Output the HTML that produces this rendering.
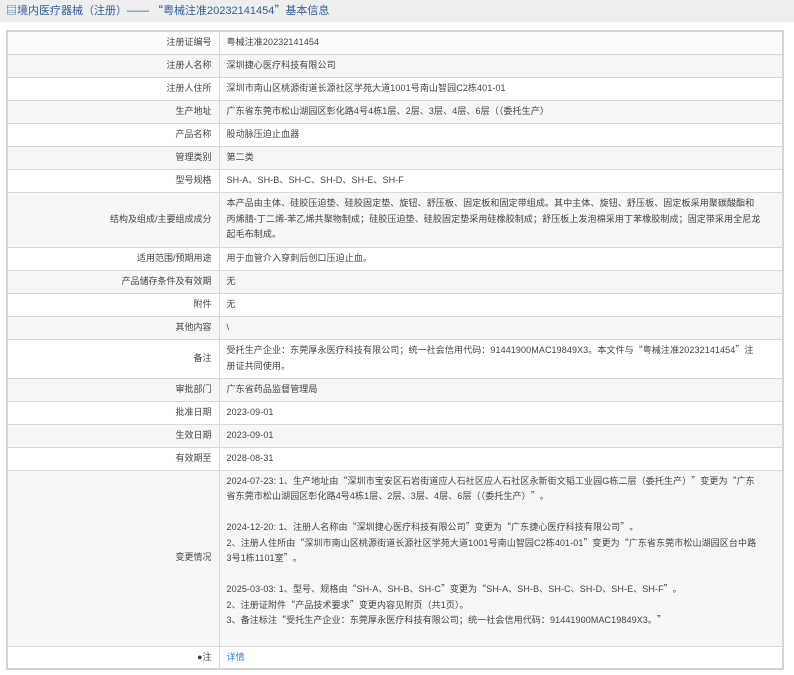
<!DOCTYPE html>
<html><head><meta charset="utf-8"><style>
*{margin:0;padding:0;box-sizing:border-box}
body{width:794px;height:675px;background:#fff;font-family:"Liberation Sans","Noto Sans CJK SC",sans-serif;font-size:9px;color:#444;position:relative;overflow:hidden}
.hd{height:22px;background:#eeeeee;color:#2e5f9e;font-size:11px;line-height:22px;padding-left:6px}
table{position:absolute;left:6px;top:30px;width:778px;border-collapse:collapse;border:2px solid #d4d4d4}
td{border:1px solid #d8d8d8;vertical-align:middle;line-height:15.5px}
td.l{width:212px;text-align:right;padding-right:7px}
td.v{padding-left:7px;padding-right:6px;letter-spacing:0.1px}
tr{height:23px}
tr.g{background:#f6f6f6}
tr.f{background:#fafcfe}
a{color:#3c7fd6;text-decoration:none}
q{quotes:none;font-family:"Noto Sans CJK SC",sans-serif;display:inline-block;width:1em;letter-spacing:0;line-height:8px;height:8px;vertical-align:baseline}
q.o{text-align:right}
.hd q{line-height:10px;height:10px}
</style></head><body>
<div class="hd">▤境内医疗器械（注册）—— <q class="o">“</q>粤械注准20232141454<q>”</q>基本信息</div>
<table>
<tr class="f"><td class="l">注册证编号</td><td class="v">粤械注准20232141454</td></tr>
<tr class="g"><td class="l">注册人名称</td><td class="v">深圳捷心医疗科技有限公司</td></tr>
<tr><td class="l">注册人住所</td><td class="v">深圳市南山区桃源街道长源社区学苑大道1001号南山智园C2栋401-01</td></tr>
<tr class="g"><td class="l">生产地址</td><td class="v">广东省东莞市松山湖园区彰化路4号4栋1层、2层、3层、4层、6层（（委托生产）</td></tr>
<tr><td class="l">产品名称</td><td class="v">股动脉压迫止血器</td></tr>
<tr class="g"><td class="l">管理类别</td><td class="v">第二类</td></tr>
<tr><td class="l">型号规格</td><td class="v">SH-A、SH-B、SH-C、SH-D、SH-E、SH-F</td></tr>
<tr class="g" style="height:55px"><td class="l">结构及组成/主要组成成分</td><td class="v">本产品由主体、硅胶压迫垫、硅胶固定垫、旋钮、舒压板、固定板和固定带组成。其中主体、旋钮、舒压板、固定板采用聚碳酸酯和<br>丙烯腈-丁二烯-苯乙烯共聚物制成；硅胶压迫垫、硅胶固定垫采用硅橡胶制成；舒压板上发泡棉采用丁苯橡胶制成；固定带采用全尼龙<br>起毛布制成。</td></tr>
<tr><td class="l">适用范围/预期用途</td><td class="v">用于血管介入穿刺后创口压迫止血。</td></tr>
<tr class="g"><td class="l">产品储存条件及有效期</td><td class="v">无</td></tr>
<tr><td class="l">附件</td><td class="v">无</td></tr>
<tr class="g"><td class="l">其他内容</td><td class="v">\</td></tr>
<tr style="height:39px"><td class="l">备注</td><td class="v">受托生产企业：东莞厚永医疗科技有限公司；统一社会信用代码：91441900MAC19849X3。本文件与<q class="o">“</q>粤械注准20232141454<q>”</q>注<br>册证共同使用。</td></tr>
<tr class="g"><td class="l">审批部门</td><td class="v">广东省药品监督管理局</td></tr>
<tr><td class="l">批准日期</td><td class="v">2023-09-01</td></tr>
<tr class="g"><td class="l">生效日期</td><td class="v">2023-09-01</td></tr>
<tr><td class="l">有效期至</td><td class="v">2028-08-31</td></tr>
<tr class="g" style="height:176px"><td class="l">变更情况</td><td class="v" style="vertical-align:top;padding-top:3px">2024-07-23: 1、生产地址由<q class="o">“</q>深圳市宝安区石岩街道应人石社区应人石社区永新街文韬工业园G栋二层（委托生产）<q>”</q>变更为<q class="o">“</q>广东<br>省东莞市松山湖园区彰化路4号4栋1层、2层、3层、4层、6层（（委托生产）<q>”</q>。<br><br>2024-12-20: 1、注册人名称由<q class="o">“</q>深圳捷心医疗科技有限公司<q>”</q>变更为<q class="o">“</q>广东捷心医疗科技有限公司<q>”</q>。<br>2、注册人住所由<q class="o">“</q>深圳市南山区桃源街道长源社区学苑大道1001号南山智园C2栋401-01<q>”</q>变更为<q class="o">“</q>广东省东莞市松山湖园区台中路<br>3号1栋1101室<q>”</q>。<br><br>2025-03-03: 1、型号、规格由<q class="o">“</q>SH-A、SH-B、SH-C<q>”</q>变更为<q class="o">“</q>SH-A、SH-B、SH-C、SH-D、SH-E、SH-F<q>”</q>。<br>2、注册证附件<q class="o">“</q>产品技术要求<q>”</q>变更内容见附页（共1页）。<br>3、备注标注<q class="o">“</q>受托生产企业：东莞厚永医疗科技有限公司；统一社会信用代码：91441900MAC19849X3。<q>”</q></td></tr>
<tr><td class="l">●注</td><td class="v"><a>详情</a></td></tr>
</table>
</body></html>
